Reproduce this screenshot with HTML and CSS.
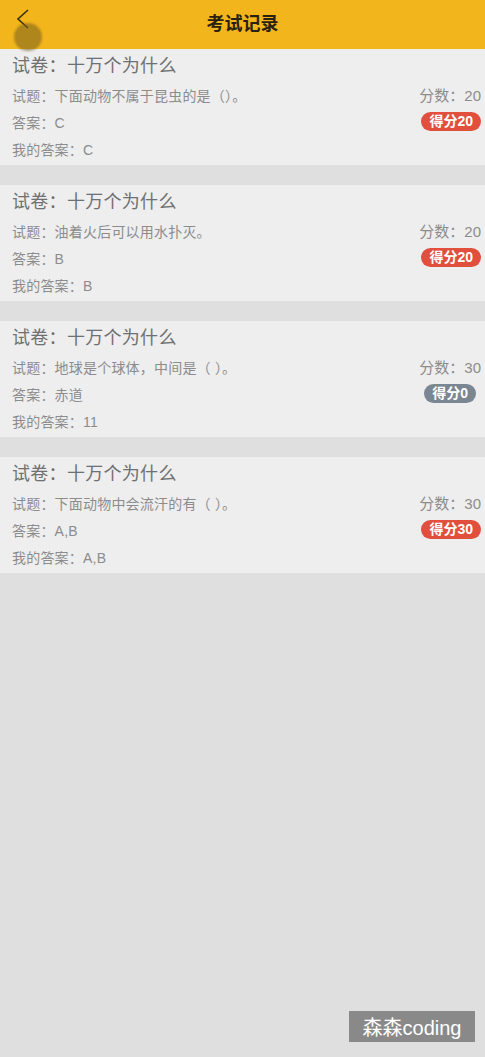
FILE: index.html
```html
<!DOCTYPE html>
<html lang="zh">
<head>
<meta charset="utf-8">
<link rel="stylesheet" href="styles.css">
</head>
<body>
<div class="page">
  <header class="topbar">
    <span class="back">
      <svg width="16" height="22" viewBox="0 0 16 22"><path d="M13 2 L3 11 L13 20" fill="none" stroke="#3a2e10" stroke-width="1.6"/></svg>
    </span>
    <span class="touch"></span>
    <h1 class="title">考试记录</h1>
  </header>
  <main class="list">
    <section class="card">
      <div class="paper">试卷：十万个为什么</div>
      <div class="row"><span class="label">试题：下面动物不属于昆虫的是（）。</span><span class="score">分数：20</span></div>
      <div class="row"><span class="label">答案：C</span><span class="badge red">得分20</span></div>
      <div class="row"><span class="label">我的答案：C</span></div>
    </section>
    <section class="card">
      <div class="paper">试卷：十万个为什么</div>
      <div class="row"><span class="label">试题：油着火后可以用水扑灭。</span><span class="score">分数：20</span></div>
      <div class="row"><span class="label">答案：B</span><span class="badge red">得分20</span></div>
      <div class="row"><span class="label">我的答案：B</span></div>
    </section>
    <section class="card">
      <div class="paper">试卷：十万个为什么</div>
      <div class="row"><span class="label">试题：地球是个球体，中间是（ ）。</span><span class="score">分数：30</span></div>
      <div class="row"><span class="label">答案：赤道</span><span class="badge grey">得分0</span></div>
      <div class="row"><span class="label">我的答案：11</span></div>
    </section>
    <section class="card">
      <div class="paper">试卷：十万个为什么</div>
      <div class="row"><span class="label">试题：下面动物中会流汗的有（ ）。</span><span class="score">分数：30</span></div>
      <div class="row"><span class="label">答案：A,B</span><span class="badge red">得分30</span></div>
      <div class="row"><span class="label">我的答案：A,B</span></div>
    </section>
  </main>
  <div class="watermark">森森coding</div>
</div>
</body>
</html>
```

FILE: styles.css
```css
* { box-sizing: border-box; }
html, body { margin: 0; padding: 0; }
body {
  background: #dfdfdf;
  font-family: "Liberation Sans", "Noto Sans CJK SC", sans-serif;
  width: 485px;
  height: 1057px;
  overflow: hidden;
}
.page { position: relative; height: 1057px; }
.topbar {
  position: relative;
  height: 49px;
  background: #f2b51b;
  display: flex;
  align-items: center;
  justify-content: center;
}
.back {
  position: absolute;
  left: 15px;
  top: 8px;
  display: flex;
}
.touch {
  position: absolute;
  left: 14px;
  top: 23px;
  width: 28px;
  height: 28px;
  border-radius: 50%;
  background: rgba(120, 95, 30, 0.55);
  filter: blur(1px);
}
.title {
  margin: 0;
  margin-top: -6px;
  font-size: 18px;
  font-weight: bold;
  color: #2a2210;
}
.list {
  display: flex;
  flex-direction: column;
  gap: 20px;
}
.card {
  background: #eeeeee;
  height: 116px;
  padding: 5px 4px 0 12px;
  display: flex;
  flex-direction: column;
}
.paper {
  font-size: 18px;
  color: #707070;
  height: 24px;
  line-height: 24px;
  letter-spacing: 0.3px;
}
.row {
  display: flex;
  justify-content: space-between;
  align-items: center;
  height: 27px;
  font-size: 14px;
  color: #8c8c8c;
}
.row:nth-child(2) { margin-top: 3px; }
.label { letter-spacing: 0.2px; white-space: pre; }
.score { color: #8c8c8c; font-size: 15px; }
.badge {
  color: #fff;
  font-size: 14px;
  font-weight: bold;
  height: 19px;
  line-height: 19px;
  padding: 0 8px;
  border-radius: 10px;
}
.badge.red { background: #e0503c; }
.badge.grey { background: #7b8693; margin-right: 5px; }
.watermark {
  position: absolute;
  left: 349px;
  top: 1011px;
  width: 126px;
  height: 31px;
  background: #898989;
  color: #ffffff;
  font-size: 20px;
  display: flex;
  align-items: center;
  justify-content: center;
}
```
